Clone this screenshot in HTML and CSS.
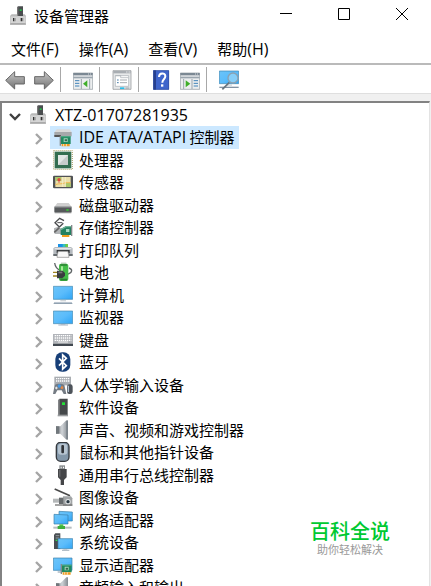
FILE: index.html
```html
<!DOCTYPE html>
<html lang="zh-CN">
<head>
    <meta charset="UTF-8">
    <meta name="viewport" content="width=device-width, initial-scale=1.0">
    <title>设备管理器</title>
    <link rel="stylesheet" href="styles.css">
</head>
<body>
    <!-- shared shapes -->
    <svg class="defs" aria-hidden="true">
        <defs>
            <linearGradient id="screen" x1="0" y1="0" x2="1" y2="1">
                <stop offset="0" stop-color="#6cc4f8"/>
                <stop offset="0.5" stop-color="#5bbcfb"/>
                <stop offset="1" stop-color="#2ea4f5"/>
            </linearGradient>
            <linearGradient id="metal" x1="0" y1="0" x2="0" y2="1">
                <stop offset="0" stop-color="#c9c9c9"/>
                <stop offset="1" stop-color="#707070"/>
            </linearGradient>
            <linearGradient id="cone" x1="0" y1="0" x2="1" y2="0">
                <stop offset="0" stop-color="#75797d"/>
                <stop offset="0.5" stop-color="#d0d4d8"/>
                <stop offset="1" stop-color="#868c92"/>
            </linearGradient>
            <symbol id="chevron" viewBox="0 0 12 12">
                <path d="M3 1l5 5-5 5" fill="none" stroke="currentColor" stroke-width="2.4"/>
            </symbol>
            <symbol id="device" viewBox="0 0 60 60">
                <path d="M24 4l4-3h14v29H24z" fill="#4a4d4f"/>
                <path d="M24 4l4-3v29h-4z" fill="#777"/>
                <path d="M32 10h6v5h-6z" fill="#25c14a"/>
                <path d="M3 30l5-5h17v6h17v-6h5l4 5v27H3z" fill="#b9b9b9"/>
                <path d="M4 31h46v25H4z" fill="#d4d4d4"/>
                <path d="M4 51h46v5H4z" fill="#aaa"/>
                <path d="M12 36h4v10h-4zM35 36h4v10h-4z" fill="#333"/>
                <path d="M16 36h4v10h-4zM39 36h4v10h-4z" fill="#909090"/>
            </symbol>
            <symbol id="card" viewBox="0 0 36 36">
                <path d="M4 3h30v23H4z" fill="#20895f"/>
                <path d="M4 3h30v3H4z" fill="#4eaa83"/>
                <path d="M1 1h4v30H1z" fill="#85898a"/>
                <path d="M13 9h12v11H13z" fill="#a9d8bd"/>
                <path d="M16 12h7v6h-7z" fill="#35664f"/>
                <path d="M7 26h24v7H7z" fill="#ee9b20"/>
                <path d="M13 26v7M21 26v7" stroke="#fff" stroke-width="2"/>
            </symbol>
        </defs>
    </svg>

    <header class="title-bar">
        <svg class="icon" viewBox="0 0 60 60"><use href="#device"/></svg>
        <h1>设备管理器</h1>
        <div class="window-controls">
            <button type="button" aria-label="最小化"><svg viewBox="0 0 12 12"><path d="M0 5.5h12"/></svg></button>
            <button type="button" aria-label="最大化"><svg viewBox="0 0 12 12"><path d="M.5.5h11v11H.5z"/></svg></button>
            <button type="button" aria-label="关闭"><svg viewBox="0 0 12 12"><path d="M0 0l12 12M12 0L0 12"/></svg></button>
        </div>
    </header>

    <nav class="menu-bar">
        <button type="button">文件<span class="latin">(F)</span></button>
        <button type="button">操作<span class="latin">(A)</span></button>
        <button type="button">查看<span class="latin">(V)</span></button>
        <button type="button">帮助<span class="latin">(H)</span></button>
    </nav>

    <div class="toolbar">
        <div class="tool-group">
            <button type="button" aria-label="后退">
                <svg class="icon" viewBox="0 0 60 60"><path d="M2 31L29 5v15h29v22H29v15z" fill="url(#metal)" stroke="#666" stroke-width="3" stroke-linejoin="round"/></svg>
            </button>
            <button type="button" aria-label="前进">
                <svg class="icon" viewBox="0 0 60 60"><path d="M58 31L31 5v15H2v22h29v15z" fill="url(#metal)" stroke="#666" stroke-width="3" stroke-linejoin="round"/></svg>
            </button>
        </div>
        <div class="tool-group">
            <button type="button" aria-label="显示控制台树">
                <svg class="icon" viewBox="0 0 60 60">
                    <path d="M1 9h58v49H1z" fill="#eceeef" stroke="#8b949c" stroke-width="2"/>
                    <path d="M1 9h58v7H1z" fill="#7b8893"/>
                    <path d="M1 20h58v5H1z" fill="#9aa5ae"/>
                    <path d="M45 12h3M51 12h3" stroke="#fff" stroke-width="2"/>
                    <path d="M25 27v30M50 27v30" stroke="#9aa5ae" stroke-width="3"/>
                    <path d="M6 32h13M6 40h13M6 48h13" stroke="#3f82b8" stroke-width="3"/>
                    <path d="M43 31v21L30 41z" fill="#3fae29"/>
                </svg>
            </button>
        </div>
        <div class="tool-group">
            <button type="button" aria-label="属性">
                <svg class="icon" viewBox="0 0 60 60">
                    <path d="M3 2h54v56H3z" fill="#e7e9ea" stroke="#8a8d90" stroke-width="2"/>
                    <path d="M4 3h52v7H4z" fill="#a8adb2"/>
                    <path d="M43 6h3M50 6h3" stroke="#fff" stroke-width="3"/>
                    <path d="M10 17h40v32H10z" fill="#fff" stroke="#a5abb0" stroke-width="2"/>
                    <path d="M10 17h16v6h23" fill="none" stroke="#a5abb0" stroke-width="2"/>
                    <path d="M15 30h5M15 38h5" stroke="#477ca6" stroke-width="3"/>
                    <path d="M24 30h21M24 38h21" stroke="#a5abb0" stroke-width="3"/>
                    <path d="M24 52h13v5H24z" fill="#28bce9"/>
                    <path d="M40 52h12v5H40z" fill="#b4b8bb"/>
                </svg>
            </button>
        </div>
        <div class="tool-group">
            <button type="button" aria-label="帮助">
                <svg class="icon" viewBox="0 0 60 60">
                    <path d="M7 1h47v58H7z" fill="#3f65cb"/>
                    <path d="M7 1h8v58H7z" fill="#263f8e"/>
                    <path d="M8 2h45v56H8z" fill="none" stroke="#334f9d" stroke-width="2"/>
                    <path d="M24 21c0-14 19-14 19-2 0 9-9 9-9 19" fill="none" stroke="#fff" stroke-width="6"/>
                    <path d="M30 43h7v7h-7z" fill="#fff"/>
                </svg>
            </button>
            <button type="button" aria-label="操作">
                <svg class="icon" viewBox="0 0 60 60">
                    <path d="M1 9h58v49H1z" fill="#eceeef" stroke="#8b949c" stroke-width="2"/>
                    <path d="M1 9h58v7H1z" fill="#7b8893"/>
                    <path d="M1 20h58v5H1z" fill="#9aa5ae"/>
                    <path d="M45 12h3M51 12h3" stroke="#fff" stroke-width="2"/>
                    <path d="M11 27v30M36 27v30" stroke="#9aa5ae" stroke-width="3"/>
                    <path d="M41 32h13M41 40h13M41 48h13" stroke="#3f82b8" stroke-width="3"/>
                    <path d="M17 31v21l14-11z" fill="#3fae29"/>
                </svg>
            </button>
        </div>
        <div class="tool-group">
            <button type="button" aria-label="扫描检测硬件改动">
                <svg class="icon" viewBox="0 0 60 60">
                    <path d="M1 3h58v38H1z" fill="url(#screen)" stroke="#3983b0" stroke-width="2"/>
                    <path d="M22 42h17v6H22z" fill="#d9dfe4"/>
                    <path d="M1 52h58" stroke="#8293a4" stroke-width="4"/>
                    <path d="M31 37L10 58" stroke="#68747e" stroke-width="5"/>
                    <circle cx="42" cy="24" r="15" fill="#86cef8" stroke="#8ba1b1" stroke-width="4"/>
                </svg>
            </button>
        </div>
    </div>

    <main class="tree-panel">
        <ul class="tree">
            <li>
                <div class="row">
                    <button type="button" class="expander open" aria-label="折叠"><svg><use href="#chevron"/></svg></button>
                    <span class="item"><svg class="icon" viewBox="0 0 60 60"><use href="#device"/></svg><span class="latin">XTZ-01707281935</span></span>
                </div>
                <ul class="devices">
                    <li class="row">
                        <button type="button" class="expander" aria-label="展开"><svg><use href="#chevron"/></svg></button>
                        <span class="item selected">
                            <svg class="icon" viewBox="0 0 60 60">
                                <path d="M5 15l6-8h39l6 8z" fill="#dadada"/>
                                <path d="M4 15h52v13H4z" fill="#a6a8aa"/>
                                <path d="M4 24h20v6H4z" fill="#555"/>
                                <use href="#card" x="18" y="25" width="38" height="36"/>
                            </svg>
                            <span><span class="latin">IDE ATA/ATAPI</span> 控制器</span>
                        </span>
                    </li>
                    <li class="row">
                        <button type="button" class="expander" aria-label="展开"><svg><use href="#chevron"/></svg></button>
                        <span class="item">
                            <svg class="icon" viewBox="0 0 60 60">
                                <path d="M2 2h56v56H2z" fill="none" stroke="#a39a5f" stroke-width="3" stroke-dasharray="3 3"/>
                                <path d="M5 5h50v50H5z" fill="#346e50"/>
                                <path d="M15 15h30v30H15z" fill="#c7ccca"/>
                                <path d="M15 15h30L15 45z" fill="#e3e7e5"/>
                            </svg>
                            处理器
                        </span>
                    </li>
                    <li class="row">
                        <button type="button" class="expander" aria-label="展开"><svg><use href="#chevron"/></svg></button>
                        <span class="item">
                            <svg class="icon" viewBox="0 0 60 60">
                                <rect x="0" y="11" width="60" height="38" rx="4" fill="#505254"/>
                                <path d="M7 15h46v30H7z" fill="#e9dfab"/>
                                <path d="M7 15h18v12H7zM38 33h15v12H38z" fill="#a8c86b"/>
                                <path d="M7 38c12-5 18 0 31-6h15" fill="none" stroke="#f0b850" stroke-width="3"/>
                                <path d="M37 15v30M29 15v30" stroke="#f7f2d7" stroke-width="2"/>
                                <circle cx="18" cy="23" r="5" fill="#e34b3e"/>
                                <path d="M18 25v8" stroke="#c93831" stroke-width="2"/>
                            </svg>
                            传感器
                        </span>
                    </li>
                    <li class="row">
                        <button type="button" class="expander" aria-label="展开"><svg><use href="#chevron"/></svg></button>
                        <span class="item">
                            <svg class="icon" viewBox="0 0 60 60">
                                <path d="M4 36l9-12h34l9 12z" fill="#cfcfcf"/>
                                <rect x="4" y="35" width="52" height="18" rx="3" fill="#56595b"/>
                                <path d="M4 36h52" stroke="#96999b" stroke-width="3"/>
                                <path d="M40 43h7v4h-7z" fill="#31e52d"/>
                                <path d="M5 54h50" stroke="#aaa" stroke-width="2"/>
                            </svg>
                            磁盘驱动器
                        </span>
                    </li>
                    <li class="row">
                        <button type="button" class="expander" aria-label="展开"><svg><use href="#chevron"/></svg></button>
                        <span class="item">
                            <svg class="icon" viewBox="0 0 60 60">
                                <path d="M33 11L20 4 6 17l13 13 12-11" fill="none" stroke="#4c4e50" stroke-width="4"/>
                                <path d="M13 17h15" stroke="#4c4e50" stroke-width="3"/>
                                <path d="M3 34l12-5 12 6v16H6l-3-4z" fill="#b2b5b7"/>
                                <path d="M4 46l15-14" stroke="#666" stroke-width="5"/>
                                <path d="M23 36l16-9h18v27H23z" fill="#248161"/>
                                <path d="M23 36l16-9h18v4H40l-16 9z" fill="#71b598"/>
                                <path d="M39 36h10v9H39z" fill="#a4dac0"/>
                                <path d="M56 24v33" stroke="#838789" stroke-width="4"/>
                                <path d="M27 54h22v6H27z" fill="#f09d1d"/>
                            </svg>
                            存储控制器
                        </span>
                    </li>
                    <li class="row">
                        <button type="button" class="expander" aria-label="展开"><svg><use href="#chevron"/></svg></button>
                        <span class="item">
                            <svg class="icon" viewBox="0 0 60 60">
                                <path d="M15 12h30v12H15z" fill="#1991e6"/>
                                <path d="M29 12h8v9h-8z" fill="#36c3bc"/>
                                <path d="M37 12h8v9h-8z" fill="#70cc43"/>
                                <path d="M1 25l5-4h48l5 4v22H1z" fill="#b5babf"/>
                                <path d="M5 24h50v4H5z" fill="#e4e7e8"/>
                                <path d="M11 30h39v10H11z" fill="#303437"/>
                                <path d="M15 34h30l3 18H12z" fill="#f8f8f8" stroke="#888" stroke-width="2"/>
                                <path d="M1 42h11v6H1zM48 42h11v6H48z" fill="#666c70"/>
                            </svg>
                            打印队列
                        </span>
                    </li>
                    <li class="row">
                        <button type="button" class="expander" aria-label="展开"><svg><use href="#chevron"/></svg></button>
                        <span class="item">
                            <svg class="icon" viewBox="0 0 60 60">
                                <path d="M5 3c2 14 8 19 17 21M48 18c12 4 9 13 0 17s-14 5-14 5" fill="none" stroke="#5f6566" stroke-width="4"/>
                                <path d="M24 1h16v8H24z" fill="#d4d8d4"/>
                                <rect x="18" y="5" width="28" height="52" rx="6" fill="#43bd48"/>
                                <path d="M22 9h20M22 53h20" stroke="#2c8133" stroke-width="5"/>
                                <path d="M24 13h6v34h-6z" fill="#a6ea98"/>
                                <path d="M0 31h16M0 42h16" stroke="#9f8520" stroke-width="4"/>
                                <path d="M12 26h17l7 7v8l-8 8H12z" fill="#393c3f"/>
                                <path d="M16 29h12v5H16z" fill="#777"/>
                            </svg>
                            电池
                        </span>
                    </li>
                    <li class="row">
                        <button type="button" class="expander" aria-label="展开"><svg><use href="#chevron"/></svg></button>
                        <span class="item">
                            <svg class="icon" viewBox="0 0 60 60">
                                <path d="M1 4h58v39H1z" fill="url(#screen)" stroke="#4387ae" stroke-width="2"/>
                                <path d="M22 45h17v4H22z" fill="#d0d5d9"/>
                                <path d="M5 51h50l4 6H1z" fill="#91a2b1"/>
                                <path d="M5 52h50" stroke="#dce3e8" stroke-width="2"/>
                            </svg>
                            计算机
                        </span>
                    </li>
                    <li class="row">
                        <button type="button" class="expander" aria-label="展开"><svg><use href="#chevron"/></svg></button>
                        <span class="item">
                            <svg class="icon" viewBox="0 0 60 60">
                                <path d="M1 12h58v38H1z" fill="url(#screen)" stroke="#4387ae" stroke-width="2"/>
                                <path d="M23 51h14v3H23z" fill="#ccd4dc"/>
                                <path d="M16 54h29" stroke="#7890a5" stroke-width="2"/>
                            </svg>
                            监视器
                        </span>
                    </li>
                    <li class="row">
                        <button type="button" class="expander" aria-label="展开"><svg><use href="#chevron"/></svg></button>
                        <span class="item">
                            <svg class="icon" viewBox="0 0 60 60">
                                <path d="M0 12h60v29H0z" fill="#b2b5ba"/>
                                <path d="M5 17h50M5 24h50M5 31h50" stroke="#fff" stroke-width="4" stroke-dasharray="4 2"/>
                                <path d="M15 36h30" stroke="#eee" stroke-width="3"/>
                                <path d="M0 41h60v7H0z" fill="#414850"/>
                            </svg>
                            键盘
                        </span>
                    </li>
                    <li class="row">
                        <button type="button" class="expander" aria-label="展开"><svg><use href="#chevron"/></svg></button>
                        <span class="item">
                            <svg class="icon" viewBox="0 0 60 60">
                                <rect x="7" y="1" width="45" height="58" rx="20" fill="#173f78"/>
                                <path d="M18 19l22 22-11 10V9l11 10-22 22" fill="none" stroke="#fff" stroke-width="5"/>
                            </svg>
                            蓝牙
                        </span>
                    </li>
                    <li class="row">
                        <button type="button" class="expander" aria-label="展开"><svg><use href="#chevron"/></svg></button>
                        <span class="item">
                            <svg class="icon" viewBox="0 0 60 60">
                                <path d="M4 5h50v26H4z" fill="#a9adb2"/>
                                <path d="M9 11h40M9 18h40" stroke="#fff" stroke-width="4" stroke-dasharray="4 2"/>
                                <path d="M5 30c8-5 21-5 29 0l6 27h-8l-6-11H13L7 57H0z" fill="#747b83"/>
                                <path d="M10 35v8M6 39h8" stroke="#eee" stroke-width="3"/>
                                <circle cx="19" cy="33" r="5" fill="#4198e9"/>
                                <circle cx="27" cy="38" r="4" fill="#e88943"/>
                                <rect x="42" y="28" width="17" height="29" rx="7" fill="#4d535a"/>
                                <path d="M46 32v19" stroke="#b3c2d0" stroke-width="4"/>
                            </svg>
                            人体学输入设备
                        </span>
                    </li>
                    <li class="row">
                        <button type="button" class="expander" aria-label="展开"><svg><use href="#chevron"/></svg></button>
                        <span class="item">
                            <svg class="icon" viewBox="0 0 60 60">
                                <path d="M16 9l4-4h24v49H16z" fill="#45484a"/>
                                <path d="M16 9l4-4v49h-4z" fill="#858789"/>
                                <path d="M27 16h9v8h-9z" fill="#24e036"/>
                                <path d="M14 53h31v5H14z" fill="#999b9d"/>
                            </svg>
                            软件设备
                        </span>
                    </li>
                    <li class="row">
                        <button type="button" class="expander" aria-label="展开"><svg><use href="#chevron"/></svg></button>
                        <span class="item">
                            <svg class="icon" viewBox="0 0 60 60">
                                <path d="M9 19h13L40 1h5v58h-5L22 41H9z" fill="url(#cone)"/>
                                <path d="M9 19h10v22H9z" fill="#71777c"/>
                                <path d="M42 3v54" stroke="#747e86" stroke-width="4"/>
                            </svg>
                            声音、视频和游戏控制器
                        </span>
                    </li>
                    <li class="row">
                        <button type="button" class="expander" aria-label="展开"><svg><use href="#chevron"/></svg></button>
                        <span class="item">
                            <svg class="icon" viewBox="0 0 60 60">
                                <rect x="10" y="1" width="38" height="57" rx="13" fill="#8397a9" stroke="#35393e" stroke-width="4"/>
                                <rect x="15" y="5" width="28" height="33" rx="9" fill="#b6c4d0"/>
                                <rect x="25" y="9" width="8" height="25" rx="3" fill="#303338"/>
                            </svg>
                            鼠标和其他指针设备
                        </span>
                    </li>
                    <li class="row">
                        <button type="button" class="expander" aria-label="展开"><svg><use href="#chevron"/></svg></button>
                        <span class="item">
                            <svg class="icon" viewBox="0 0 60 60">
                                <path d="M19 1h17v12H19z" fill="#888c8e"/>
                                <path d="M23 5h3v5h-3zM30 5h3v5h-3z" fill="#fff"/>
                                <path d="M15 12h26v25l-8 8v15H23V45l-8-8z" fill="#454648"/>
                                <path d="M19 15h3v20h-3z" fill="#747678"/>
                            </svg>
                            通用串行总线控制器
                        </span>
                    </li>
                    <li class="row">
                        <button type="button" class="expander" aria-label="展开"><svg><use href="#chevron"/></svg></button>
                        <span class="item">
                            <svg class="icon" viewBox="0 0 60 60">
                                <path d="M5 6l46 20" stroke="#4a4a4a" stroke-width="5"/>
                                <path d="M30 28h24l4 6v23H30z" fill="#a1a4a6"/>
                                <path d="M0 35h18v12H0z" fill="#b5b8b9"/>
                                <path d="M18 32h13v19H18z" fill="#686c6e"/>
                                <path d="M6 54h52" stroke="#777" stroke-width="4"/>
                                <circle cx="45" cy="44" r="8" fill="#e1e4e5"/>
                                <circle cx="45" cy="44" r="5" fill="#2d3b45"/>
                            </svg>
                            图像设备
                        </span>
                    </li>
                    <li class="row">
                        <button type="button" class="expander" aria-label="展开"><svg><use href="#chevron"/></svg></button>
                        <span class="item">
                            <svg class="icon" viewBox="0 0 60 60">
                                <path d="M18 4l40 2v27H18z" fill="url(#screen)" stroke="#397da7" stroke-width="2"/>
                                <path d="M3 13l42 2v27H3z" fill="url(#screen)" stroke="#397da7" stroke-width="2"/>
                                <path d="M19 43h12v7H19z" fill="#4fc34c"/>
                                <path d="M1 53h55" stroke="#b7bdc0" stroke-width="6"/>
                                <path d="M14 48h22v9H14z" fill="#3faf3e"/>
                            </svg>
                            网络适配器
                        </span>
                    </li>
                    <li class="row">
                        <button type="button" class="expander" aria-label="展开"><svg><use href="#chevron"/></svg></button>
                        <span class="item">
                            <svg class="icon" viewBox="0 0 60 60">
                                <path d="M3 8l4-4h15v47H3z" fill="#494e52"/>
                                <path d="M8 11h11M8 18h11" stroke="#949a9e" stroke-width="3"/>
                                <path d="M8 23h5v4H8z" fill="#2fe444"/>
                                <path d="M15 20h44v30H15z" fill="url(#screen)" stroke="#397da7" stroke-width="2"/>
                                <path d="M31 51h12v3H31z" fill="#ccd2d8"/>
                                <path d="M27 55h22" stroke="#778b9c" stroke-width="2"/>
                            </svg>
                            系统设备
                        </span>
                    </li>
                    <li class="row">
                        <button type="button" class="expander" aria-label="展开"><svg><use href="#chevron"/></svg></button>
                        <span class="item">
                            <svg class="icon" viewBox="0 0 60 60">
                                <path d="M1 9h56v37H1z" fill="url(#screen)" stroke="#397da7" stroke-width="2"/>
                                <path d="M14 51h11" stroke="#8597a5" stroke-width="3"/>
                                <use href="#card" x="21" y="26" width="38" height="36"/>
                            </svg>
                            显示适配器
                        </span>
                    </li>
                    <li class="row">
                        <button type="button" class="expander" aria-label="展开"><svg><use href="#chevron"/></svg></button>
                        <span class="item">
                            <svg class="icon" viewBox="0 0 60 60">
                                <path d="M9 19h13L40 1h5v58h-5L22 41H9z" fill="url(#cone)"/>
                                <path d="M9 19h10v22H9z" fill="#71777c"/>
                            </svg>
                            音频输入和输出
                        </span>
                    </li>
                </ul>
            </li>
        </ul>
    </main>

    <div class="watermark">
        <strong>百科全说</strong>
        <span>助你轻松解决</span>
    </div>
</body>
</html>
```

FILE: styles.css
```css
* {
    box-sizing: border-box;
}
body {
    display: flex;
    flex-direction: column;
    height: 100vh;
    margin: 0;
    overflow: hidden;
    background-color: #f0f0f0;
    color: #000;
    font-family: "Noto Sans CJK SC", sans-serif;
    font-size: 15px;
    line-height: 22px;
    user-select: none;
}
button {
    padding: 0;
    border: none;
    background: none;
    color: inherit;
    font: inherit;
}
ul {
    list-style: none;
    margin: 0;
    padding: 0;
}
.defs {
    position: absolute;
    width: 0;
    height: 0;
}
.icon {
    display: block;
    flex: none;
    width: 20px;
    height: 20px;
}
.latin {
    font-family: "Open Sans", "Noto Sans", sans-serif;
    font-size: 16px;
}

/* title bar */
.title-bar {
    display: flex;
    flex: none;
    align-items: center;
    height: 33px;
    padding: 0 0 2px 9px;
    background-color: #fff;
}
.title-bar h1 {
    margin: 0 0 0 5px;
    font-size: 15px;
    font-weight: normal;
}
.window-controls {
    display: flex;
    align-self: stretch;
    margin-left: auto;
}
.window-controls button {
    display: flex;
    justify-content: center;
    width: 58px;
    padding-top: 8px;
}
.window-controls svg {
    width: 12px;
    height: 12px;
    fill: none;
    stroke: #000;
}

/* menu */
.menu-bar {
    display: flex;
    flex: none;
    gap: 20px;
    height: 32px;
    padding: 5px 11px 0;
    border-bottom: 2px solid #bababa;
    background-color: #fff;
}
.menu-bar button {
    height: 22px;
}

/* toolbar */
.toolbar {
    display: flex;
    flex: none;
    height: 29px;
    padding: 2px 5px 1px;
    border-bottom: 1px solid #dfdfdf;
    background-color: #fff;
}
.tool-group {
    display: flex;
    align-items: center;
    gap: 9px;
    padding-right: 6px;
    margin-right: 12px;
    border-right: 1px solid #a8a8a8;
}
.tool-group:last-child {
    border-right: none;
}

/* device tree */
.tree-panel {
    flex: 1;
    min-height: 0;
    margin: 7px 1px 0 0;
    padding: 1px 0 0 3px;
    overflow: hidden;
    border: 2px solid #828282;
    border-right: 1px solid #e3e3e3;
    border-bottom: none;
    background-color: #fff;
}
.devices {
    padding-left: 24px;
}
.row {
    display: flex;
    gap: 1px;
    height: 22px;
}
.devices .row:nth-child(odd) {
    height: 23px;
}
.expander {
    display: flex;
    align-items: center;
    justify-content: center;
    width: 20px;
    padding-top: 3px;
    color: #a6a6a6;
}
.expander svg {
    width: 12px;
    height: 12px;
}
.expander.open {
    color: #404040;
}
.expander.open svg {
    transform: rotate(90deg);
}
.item {
    display: flex;
    align-items: center;
    gap: 6px;
    padding: 0 4px 1px 3px;
    white-space: nowrap;
}
.item.selected {
    background-color: #cce8ff;
}

.watermark {
    position: absolute;
    right: 41px;
    bottom: 31px;
    display: flex;
    flex-direction: column;
    align-items: center;
}
.watermark strong {
    color: #00c932;
    font-size: 20px;
    font-weight: 500;
    line-height: 24px;
}
.watermark span {
    color: #999;
    font-size: 11px;
    line-height: 12px;
}
```
